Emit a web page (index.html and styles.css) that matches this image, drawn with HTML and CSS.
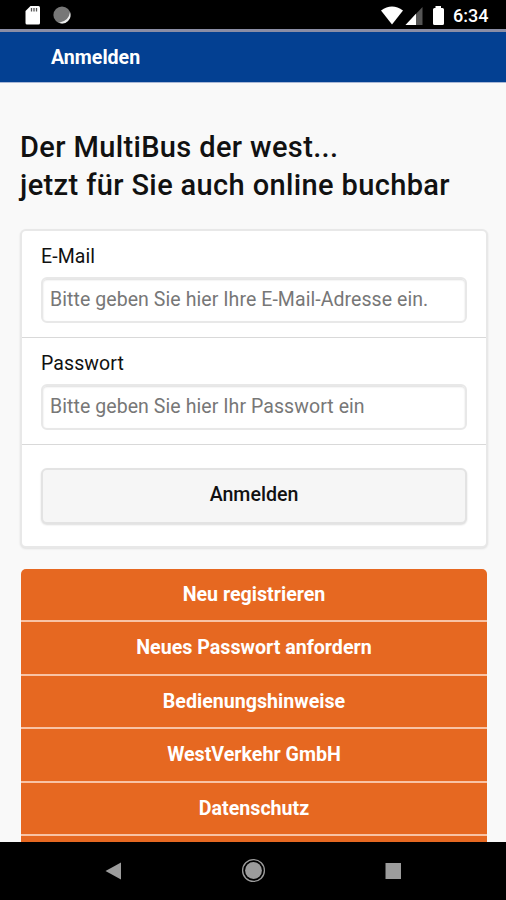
FILE: index.html
```html
<!DOCTYPE html>
<html lang="de">
<head>
<meta charset="utf-8">
<meta name="viewport" content="width=device-width, initial-scale=1">
<title>Anmelden</title>
<link rel="stylesheet" href="styles.css">
</head>
<body>
<div class="screen">
  <div class="status">
    <svg class="status-left" width="54" height="20" viewBox="24 5 54 20">
      <path d="M30.500 6h8q1.500 0 1.500 1.500v15.500q0 1.500-1.500 1.500h-11.500q-1.500 0-1.500-1.500V11z" fill="#fff"/>
      <path d="M31.500 8v3.500M34 8v3.500M36.500 8v3.500" stroke="#555" stroke-width="1.300"/>
      <circle cx="62" cy="15" r="8.600" fill="#777"/>
      <path d="M70 12a8.500 8.500 0 0 1-11 10.800Q69 21 70 12z" fill="#eee"/>
    </svg>
    <svg class="status-right" width="66" height="20" viewBox="380 5 66 20">
      <path d="M381 10.500Q392 2.500 403 10.500L392 24.500z" fill="#fff"/>
      <path d="M422.500 7v18H405.500z" fill="#555"/>
      <path d="M416 13.800V25H405.500z" fill="#fff"/>
      <path d="M435.500 6h5.500v2h1.500q1.500 0 1.500 1.500v14q0 1.500-1.500 1.500h-8q-1.500 0-1.500-1.500v-14q0-1.500 1.500-1.500h1z" fill="#fff"/>
    </svg>
    <span class="clock">6:34</span>
  </div>
  <header class="bar">Anmelden</header>
  <main class="content">
    <h1 class="title">Der MultiBus der west...<br>jetzt für Sie auch online buchbar</h1>
    <form class="card">
      <div class="field">
        <label class="label" for="mail">E-Mail</label>
        <input class="input" id="mail" type="text" placeholder="Bitte geben Sie hier Ihre E-Mail-Adresse ein.">
      </div>
      <div class="field">
        <label class="label" for="pass">Passwort</label>
        <input class="input" id="pass" type="password" placeholder="Bitte geben Sie hier Ihr Passwort ein">
      </div>
      <div class="action"><button class="button" type="button">Anmelden</button></div>
    </form>
    <nav class="links">
      <a class="link">Neu registrieren</a>
      <a class="link">Neues Passwort anfordern</a>
      <a class="link">Bedienungshinweise</a>
      <a class="link">WestVerkehr GmbH</a>
      <a class="link">Datenschutz</a>
      <a class="link"></a>
    </nav>
  </main>
  <footer class="navbar">
    <svg width="506" height="58" viewBox="0 842 506 58">
      <path d="M105.500 871L121 862.500v17z" fill="#9c9c9c"/>
      <circle cx="253.500" cy="870.500" r="8.400" fill="#9c9c9c"/>
      <circle cx="253.500" cy="870.500" r="10.900" fill="none" stroke="#9c9c9c" stroke-width="1.300"/>
      <path d="M385.500 863h15.500v16h-15.500z" fill="#9c9c9c"/>
    </svg>
  </footer>
</div>
</body>
</html>
```
FILE: styles.css
```css
* { box-sizing: border-box; }
body { margin: 0; font-family: Roboto, "Liberation Sans", sans-serif; color: #111; background: #f9f9f9; }
.screen { display: flex; flex-direction: column; height: 900px; overflow: hidden; }
.status { flex: none; height: 29px; padding: 5px 18px 0 24px; display: flex; background: #000; }
.status-right { margin-left: auto; }
.clock { width: 35px; margin-left: 7px; color: #fff; font-size: 18px; line-height: 22px; font-weight: 500; white-space: nowrap; }
.bar { flex: none; height: 54px; padding-left: 51px; line-height: 51px; font-size: 19.600px; font-weight: 700; color: #fff; background: #034092; border-top: 3px solid #8a8da5; border-bottom: 1px solid #aab8d6; }
.content { flex: 1; min-height: 0; padding: 45px 18px 0 20px; overflow: hidden; }
.title { margin: 0; height: 101px; font-size: 29px; line-height: 38px; letter-spacing: .37px; font-weight: 500; white-space: nowrap; }
.card { height: 319px; background: #fff; border: 2px solid #e8e8e8; border-radius: 6px; box-shadow: 0 1px 2px #e0e0e0; }
.field { height: 107px; padding: 15px 19px 0; border-bottom: 1px solid #d9d9d9; }
.label { display: block; height: 31px; line-height: 22px; font-size: 19.500px; letter-spacing: .1px; }
.input { display: block; width: 426px; height: 46px; padding: 0 7px 2px; border: 2px solid #e8e8e8; border-radius: 6px; background: #fff; box-shadow: inset 0 1px 2px #ddd; font-family: inherit; font-size: 19.500px; letter-spacing: .07px; }
.input::placeholder { color: #777; opacity: 1; }
.action { padding: 23px 19px 0; }
.button { display: block; width: 426px; height: 56px; padding: 0 0 3px; border: 2px solid #e3e3e3; border-radius: 6px; background: #f6f6f6; box-shadow: 0 1px 2px #ddd; font-family: inherit; font-size: 19.600px; font-weight: 500; color: #111; }
.links { width: 466px; margin: 21px 0 0 1px; border-radius: 5px 5px 0 0; overflow: hidden; }
.link { display: block; height: 53.400px; line-height: 51px; border-bottom: 2px solid #f8c3a5; background: #e66821; color: #fff; font-size: 19.650px; font-weight: 700; text-align: center; }
.navbar { flex: none; height: 58px; background: #000; }
.navbar svg { display: block; }
```
